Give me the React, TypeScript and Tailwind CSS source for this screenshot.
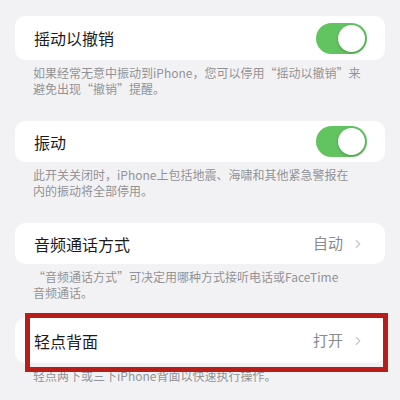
import { ChevronRight } from "lucide-react";

const font = "font-['PingFang_SC','Noto_Sans_CJK_SC',sans-serif]";

function Toggle() {
  return (
    <div className="flex h-[31px] w-[51px] items-center justify-end rounded-full bg-[#62c461] p-[2px]">
      <div className="h-[27px] w-[27px] rounded-full bg-white shadow-[0_1px_3px_rgba(0,0,0,0.25)]" />
    </div>
  );
}

function Footer({ lines }: { lines: string[] }) {
  return (
    <div className="flex flex-col gap-[1px] px-[18px] pt-[5px] text-[12px] leading-[15px] text-[#929296]">
      {lines.map((line) => (
        <span key={line}>{line}</span>
      ))}
    </div>
  );
}

export default function App() {
  return (
    <div className={`h-[400px] w-[400px] overflow-hidden bg-[#f2f2f4] px-[15px] pt-[16px] ${font}`}>
      <div className="flex h-[44px] items-center justify-between rounded-[10px] bg-white pl-[19px] pr-[18px]">
        <span className="text-[16px] text-[#1c1c1e]">摇动以撤销</span>
        <Toggle />
      </div>
      <Footer lines={["如果经常无意中振动到iPhone，您可以停用“摇动以撤销”来", "避免出现“撤销”提醒。"]} />

      <div className="mt-[25px] flex h-[41px] items-center justify-between rounded-[10px] bg-white pl-[19px] pr-[18px]">
        <span className="text-[16px] text-[#1c1c1e]">振动</span>
        <Toggle />
      </div>
      <Footer lines={["此开关关闭时，iPhone上包括地震、海啸和其他紧急警报在", "内的振动将全部停用。"]} />

      <div className="mt-[25px] flex h-[41px] items-center justify-between rounded-[10px] bg-white pl-[19px] pr-[20px]">
        <span className="text-[16px] text-[#1c1c1e]">音频通话方式</span>
        <span className="flex items-center gap-[8px] text-[15px] text-[#8a8a8e]">
          自动
          <ChevronRight className="h-[14px] w-[14px] text-[#c7c7cc]" strokeWidth={2} />
        </span>
      </div>
      <Footer lines={["“音频通话方式”可决定用哪种方式接听电话或FaceTime", "音频通话。"]} />

      <div className="relative mt-[18px]">
        <div className="flex h-[45px] items-center justify-between rounded-[10px] bg-white pl-[19px] pr-[20px]">
          <span className="text-[16px] text-[#1c1c1e]">轻点背面</span>
          <span className="flex items-center gap-[8px] text-[15px] text-[#8a8a8e]">
            打开
            <ChevronRight className="h-[14px] w-[14px] text-[#c7c7cc]" strokeWidth={2} />
          </span>
        </div>
        {/* highlight frame */}
        <div className="absolute -top-[5px] left-[10px] h-[59px] w-[363px] border-[5px] border-[#b81d19]" />
      </div>
      <Footer lines={["轻点两下或三下iPhone背面以快速执行操作。"]} />
    </div>
  );
}
